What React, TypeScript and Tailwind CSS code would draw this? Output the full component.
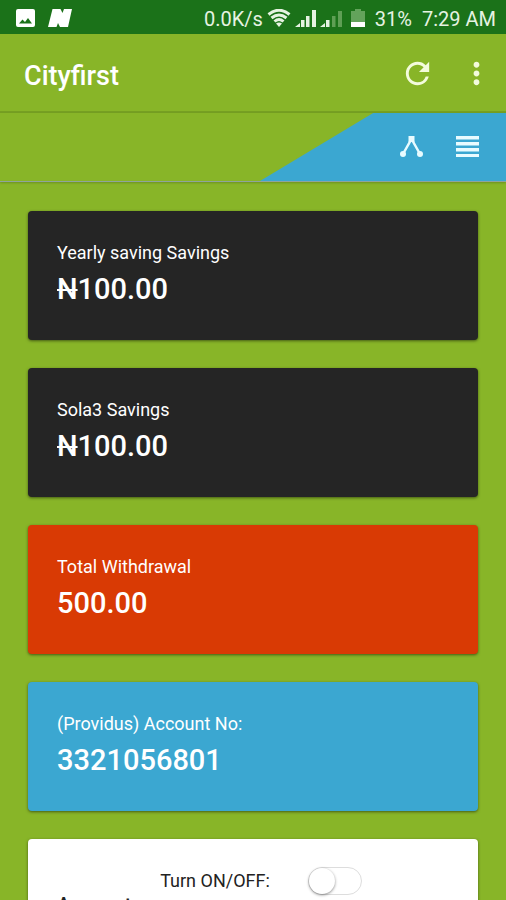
import React from 'react';
import { MdMoreVert, MdRefresh } from 'react-icons/md';

interface SummaryCard {
  label: string;
  value: string;
  color: string;
  naira?: boolean;
}

const CARDS: SummaryCard[] = [
  { label: 'Yearly saving Savings', value: '100.00', color: 'bg-[#252525]', naira: true },
  { label: 'Sola3 Savings', value: '100.00', color: 'bg-[#252525]', naira: true },
  { label: 'Total Withdrawal', value: '500.00', color: 'bg-[#d93a04]' },
  { label: '(Providus) Account No:', value: '3321056801', color: 'bg-[#3ba7d1]' },
];

const StatusBar: React.FC = () => (
  <div className="flex h-[34px] shrink-0 items-center justify-between bg-[#1b7219] pl-4 pr-[10px] pt-1 text-[20px] leading-7 text-[#e6f3e2]">
    <div className="flex items-center gap-3">
      <svg width="20" height="20" viewBox="0 0 20 20" className="fill-white" aria-hidden="true">
        <path
          fillRule="evenodd"
          d="M2 0h15q2 0 2 2v14q0 2-2 2H2q-2 0-2-2V2q0-2 2-2zM3 14.500h13l-4-5.500-3 4-2.500-2.500z"
        />
      </svg>
      <svg width="25" height="20" viewBox="0 0 25 20" className="fill-white" aria-hidden="true">
        <path d="M0 18 4.500 0h8l2 4L16 0h8l-4 18h-8l-2-4-1.500 4z" />
      </svg>
    </div>
    <div className="flex items-center">
      <span>0.0K/s</span>
      <svg width="24" height="20" viewBox="0 0 24 20" className="ml-1 fill-none stroke-[#e6f3e2]" strokeWidth="3" aria-hidden="true">
        <path d="M1.500 5.500Q12-3 22.500 5.500M4.500 9Q12 3 19.500 9M7.500 12.500Q12 8.500 16.500 12.500" />
        <path d="M12 18 9 14.500q3-2 6 0z" className="fill-[#e6f3e2] stroke-none" />
      </svg>
      <svg width="48" height="20" viewBox="0 0 48 20" className="ml-1 fill-[#e6f3e2]" aria-hidden="true">
        <path d="M0 18l5-4v4zM6 11h3.500v7H6zM11 7h3.500v11H11zM17 1h4v17h-4zM25 18l5-4v4zM31 11h3.500v7H31z" />
        <path d="M37 7h3.500v11H37zM43 2h4v16h-4z" className="fill-[#5f9f55]" />
      </svg>
      <svg width="14" height="20" viewBox="0 0 14 20" className="ml-2 fill-[#63a35b]" aria-hidden="true">
        <path d="M4 0h6v2h4v12H0V2h4z" />
        <path d="M0 13h14v5H0z" className="fill-white" />
      </svg>
      <span className="ml-[10px]">31%</span>
      <span className="ml-[10px]">7:29 AM</span>
    </div>
  </div>
);

const AppBar: React.FC = () => (
  <header className="flex h-[79px] shrink-0 items-center justify-between border-b-2 border-[#769f22] pl-6 pr-3 pt-[2px]">
    <h1 className="pt-[6px] text-[27px] font-medium text-white">Cityfirst</h1>
    <div className="flex items-center gap-6 text-[#f3fbdc]">
      <button type="button" aria-label="Refresh">
        <MdRefresh size={35} />
      </button>
      <button type="button" aria-label="More options">
        <MdMoreVert size={35} />
      </button>
    </div>
  </header>
);

const Toolbar: React.FC = () => (
  <nav className="flex h-[69px] shrink-0 justify-end border-b border-[#8fa49c] shadow-[0_1px_2px_rgba(0,0,0,0.2)]">
    <div className="flex w-[246px] items-center justify-end gap-8 bg-[#3ba7d1] pr-[27px] [clip-path:polygon(46%_0,100%_0,100%_100%,0_100%)]">
      <button type="button" aria-label="Network">
        <svg width="24" height="24" viewBox="0 0 24 24" className="fill-[#e8fbff]">
          <path d="M4 19 12.500 4 21 19" className="fill-none stroke-[#e8fbff]" strokeWidth="2.500" />
          <path d="M9.500 1h6v6h-6z" />
          <circle cx="4" cy="19" r="3" />
          <circle cx="21" cy="19" r="3" />
        </svg>
      </button>
      <button type="button" aria-label="List">
        <svg width="24" height="24" viewBox="0 0 24 24" className="fill-[#e8fbff]">
          <path d="M1 1h23v3.500H1zM1 7h23v3.500H1zM1 13h23v3.500H1zM1 19h23v3H1z" />
        </svg>
      </button>
    </div>
  </nav>
);

const Card: React.FC<SummaryCard> = ({ label, value, color, naira }) => (
  <section className={`rounded-[4px] px-[29px] py-7 text-white shadow-[0_1px_3px_rgba(0,0,0,0.5)] ${color}`}>
    <h2 className="text-[18px] leading-7">{label}</h2>
    <p className="text-[29px] font-medium leading-[45px]">
      {naira && <s>N</s>}
      {value}
    </p>
  </section>
);

const AccountCard: React.FC = () => (
  <section className="rounded-[4px] bg-white px-[29px] py-7 text-[#222222] shadow-[0_1px_3px_rgba(0,0,0,0.5)]">
    <div className="flex items-center justify-center gap-[38px] pl-4">
      <label htmlFor="account-switch" className="text-[18px] leading-7">
        Turn ON/OFF:
      </label>
      <input
        id="account-switch"
        type="checkbox"
        role="switch"
        className="h-7 w-[54px] appearance-none rounded-full border border-[#dddddd] bg-white before:block before:size-[26px] before:rounded-full before:bg-white before:shadow-[0_1px_3px_rgba(0,0,0,0.45)] checked:bg-[#3ba7d1] checked:before:ml-auto"
      />
    </div>
    <h2 className="text-[20px] font-medium leading-5">Account</h2>
  </section>
);

export default function App() {
  return (
    <div className="flex h-screen flex-col overflow-hidden bg-[#88b528] font-['Roboto','Noto_Sans',sans-serif]">
      <StatusBar />
      <AppBar />
      <Toolbar />
      <main className="flex flex-1 flex-col gap-7 overflow-hidden px-7 pt-[29px]">
        {CARDS.map((card) => (
          <Card key={card.label} {...card} />
        ))}
        <AccountCard />
      </main>
    </div>
  );
}
